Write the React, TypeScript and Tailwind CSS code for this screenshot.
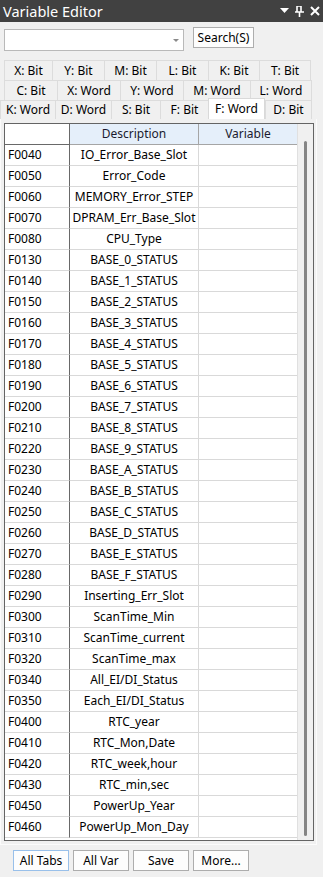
import React from 'react';

const TAB_ROWS: { label: string; w: number; active?: boolean }[][] = [
  [
    { label: 'X: Bit', w: 49 },
    { label: 'Y: Bit', w: 53 },
    { label: 'M: Bit', w: 53 },
    { label: 'L: Bit', w: 53 },
    { label: 'K: Bit', w: 52 },
    { label: 'T: Bit', w: 52 },
  ],
  [
    { label: 'C: Bit', w: 54 },
    { label: 'X: Word', w: 64 },
    { label: 'Y: Word', w: 64 },
    { label: 'M: Word', w: 68 },
    { label: 'L: Word', w: 62 },
  ],
  [
    { label: 'K: Word', w: 56 },
    { label: 'D: Word', w: 57 },
    { label: 'S: Bit', w: 50 },
    { label: 'F: Bit', w: 49 },
    { label: 'F: Word', w: 57, active: true },
    { label: 'D: Bit', w: 47 },
  ],
];

const ROWS: [string, string][] = [
  ['F0040', 'IO_Error_Base_Slot'],
  ['F0050', 'Error_Code'],
  ['F0060', 'MEMORY_Error_STEP'],
  ['F0070', 'DPRAM_Err_Base_Slot'],
  ['F0080', 'CPU_Type'],
  ['F0130', 'BASE_0_STATUS'],
  ['F0140', 'BASE_1_STATUS'],
  ['F0150', 'BASE_2_STATUS'],
  ['F0160', 'BASE_3_STATUS'],
  ['F0170', 'BASE_4_STATUS'],
  ['F0180', 'BASE_5_STATUS'],
  ['F0190', 'BASE_6_STATUS'],
  ['F0200', 'BASE_7_STATUS'],
  ['F0210', 'BASE_8_STATUS'],
  ['F0220', 'BASE_9_STATUS'],
  ['F0230', 'BASE_A_STATUS'],
  ['F0240', 'BASE_B_STATUS'],
  ['F0250', 'BASE_C_STATUS'],
  ['F0260', 'BASE_D_STATUS'],
  ['F0270', 'BASE_E_STATUS'],
  ['F0280', 'BASE_F_STATUS'],
  ['F0290', 'Inserting_Err_Slot'],
  ['F0300', 'ScanTime_Min'],
  ['F0310', 'ScanTime_current'],
  ['F0320', 'ScanTime_max'],
  ['F0340', 'All_EI/DI_Status'],
  ['F0350', 'Each_EI/DI_Status'],
  ['F0400', 'RTC_year'],
  ['F0410', 'RTC_Mon,Date'],
  ['F0420', 'RTC_week,hour'],
  ['F0430', 'RTC_min,sec'],
  ['F0450', 'PowerUp_Year'],
  ['F0460', 'PowerUp_Mon_Day'],
];

export default function App() {
  return (
    <div className="w-[323px] h-[877px] bg-[#f0f0f0] text-black text-[12px] overflow-hidden flex flex-col" style={{ fontFamily: '"Noto Sans", "Open Sans", sans-serif' }}>
      {/* Title bar */}
      <div className="h-[22px] bg-[#414141] flex items-center justify-between pl-[3px] pr-[3px] shrink-0">
        <span className="text-white text-[14.5px] leading-none">Variable Editor</span>
        <div className="flex items-center gap-[6px] text-white">
          <svg width="9" height="6" viewBox="0 0 9 6"><path d="M0 0h9L4.5 5z" fill="#fff" /></svg>
          <svg width="9" height="11" viewBox="0 0 9 11">
            <path d="M2 0v6M6 0v6M0 6h9M4.5 6v5M2 0h4" stroke="#fff" strokeWidth="1.6" fill="none" />
          </svg>
          <svg width="10" height="10" viewBox="0 0 10 10">
            <path d="M1 1l8 8M9 1l-8 8" stroke="#fff" strokeWidth="2" />
          </svg>
        </div>
      </div>

      {/* Search row */}
      <div className="flex items-start pl-[4px] pt-[5px] h-[33px] shrink-0">
        <div className="mt-[2px] w-[180px] h-[22px] bg-white border border-[#b9b9b9] flex items-center justify-end pr-[4px]">
          <svg width="6" height="3" viewBox="0 0 6 3"><path d="M0 0h6L3 3z" fill="#8a8a8a" /></svg>
        </div>
        <button className="ml-[9px] w-[61px] h-[21px] bg-[#fdfdfd] border border-[#adadad] text-[12px] leading-none flex items-center justify-center">
          Search(S)
        </button>
      </div>

      {/* Tabs */}
      <div className="flex flex-col shrink-0 mt-[5px]">
        {TAB_ROWS.map((row, ri) => (
          <div key={ri} className={ri === 2 ? 'flex h-[19px] pl-0 items-end' : 'flex h-[20px] pl-[4px]'}>
            {row.map(t => (
              <div
                key={t.label}
                style={{ width: t.w }}
                className={
                  t.active
                    ? 'h-[21px] bg-white border border-b-0 border-[#d9d9d9] flex items-center justify-center leading-none -mt-[2px] self-end'
                    : 'h-full bg-[#f0f0f0] border-t border-l border-r border-[#dcdcdc] -mr-px flex items-center justify-center leading-none'
                }
              >
                {t.label}
              </div>
            ))}
          </div>
        ))}
      </div>

      {/* Tab page */}
      <div className="w-[317px] h-[726px] border border-[#fbfbfb] border-t-0 pl-[3px] pt-[4px] shrink-0">
        <div className="w-[310px] h-[718px] border border-[#646464] bg-[#f0f0f0] flex">
          <div className="w-[292px] flex flex-col bg-white">
            <div className="flex h-[21px] shrink-0">
              <div className="w-[65px] border-r border-b border-[#696969] bg-white" />
              <div className="w-[129px] border-r border-b border-[#a5a5a5] bg-[#e5effa] flex items-center justify-center text-[#1b1b2f]">Description</div>
              <div className="w-[98px] border-b border-[#a5a5a5] bg-[#e5effa] flex items-center justify-center text-[#1b1b2f]">Variable</div>
            </div>
            {ROWS.map(([addr, desc]) => (
              <div key={addr} className="flex h-[21px] shrink-0">
                <div className="w-[65px] border-r border-r-[#696969] border-b border-b-[#d9d9d9] pl-[3px] flex items-center">{addr}</div>
                <div className="w-[129px] border-r border-b border-[#d9d9d9] flex items-center justify-center">{desc}</div>
                <div className="w-[98px] border-b border-[#d9d9d9]" />
              </div>
            ))}
          </div>
          <div className="flex-1 border-l border-[#e0e0e0] flex justify-center pt-[17px] pb-[4px]">
            <div className="w-[3px] h-full bg-[#858585] rounded-full" />
          </div>
        </div>
      </div>

      {/* Bottom buttons */}
      <div className="flex gap-[4px] pl-[13px] mt-[5px]">
        <button className="w-[56px] h-[21px] border border-[#99c0ea] bg-[#fdfdfd] leading-none">All Tabs</button>
        <button className="w-[56px] h-[21px] border border-[#adadad] bg-[#fdfdfd] leading-none">All Var</button>
        <button className="w-[56px] h-[21px] border border-[#adadad] bg-[#fdfdfd] leading-none">Save</button>
        <button className="w-[56px] h-[21px] border border-[#adadad] bg-[#fdfdfd] leading-none">More...</button>
      </div>
    </div>
  );
}
